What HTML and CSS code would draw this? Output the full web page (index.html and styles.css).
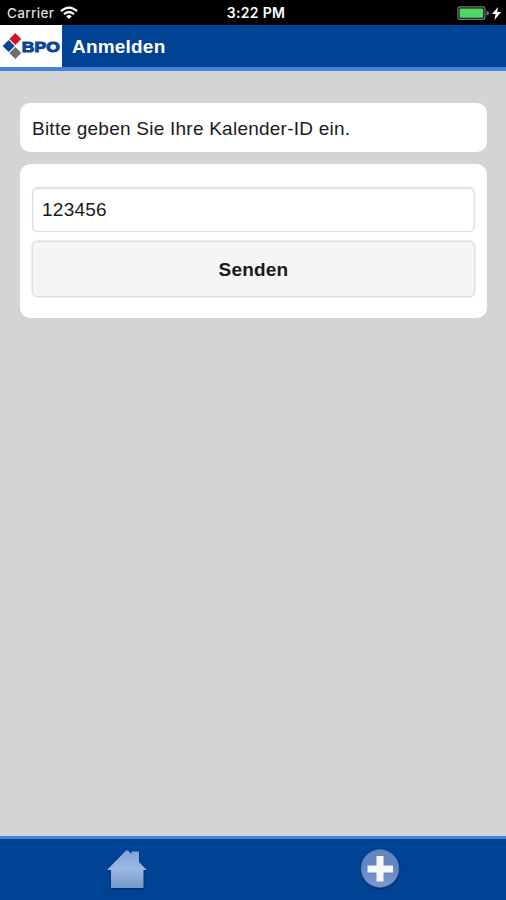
FILE: index.html
```html
<!DOCTYPE html>
<html lang="de">
<head>
    <meta charset="UTF-8">
    <meta name="viewport" content="width=device-width, initial-scale=1.0">
    <title>Anmelden</title>
    <link rel="stylesheet" href="styles.css">
</head>
<body>
    <div class="statusbar">
        <div class="carrier">
            <span>Carrier</span>
            <svg class="wifi" width="18" height="14" viewBox="0 0 18 14" fill="none" stroke="#fff" stroke-width="2.3">
                <path d="M1 5.2Q9-2 17 5.2"/>
                <path d="M4 8.2Q9 3.8 14 8.2"/>
                <path d="M9 13L6.2 10.2Q9 7.8 11.8 10.2Z" fill="#fff" stroke="none"/>
            </svg>
        </div>
        <div class="time">3:22 PM</div>
        <div class="battery">
            <svg width="46" height="15" viewBox="0 0 46 15">
                <rect x=".9" y=".9" width="27" height="12.4" rx="2" fill="#111" stroke="#777" stroke-width="1.2"/>
                <rect x="2.6" y="2.4" width="23.6" height="9.4" rx="1" fill="#4cd964"/>
                <path d="M29.5 4.6Q32 6 32 7.2T29.5 9.8Z" fill="#777"/>
                <path d="M41 1L35 8H38.6L37.4 14L44.2 6H40.2Z" fill="#fff"/>
            </svg>
        </div>
    </div>

    <header class="header">
        <div class="logo">
            <svg width="62" height="42" viewBox="0 0 62 42">
                <path d="M15.3 8L21.3 14L15.3 20L9.3 14Z" fill="#cf1722"/>
                <path d="M8.7 15L14.7 21L8.7 27L2.7 21Z" fill="#0b4396"/>
                <path d="M15.3 22L21.3 28L15.3 34L9.3 28Z" fill="#6d6e70"/>
                <text class="logo-text" x="21.8" y="26.6" textLength="38" lengthAdjust="spacingAndGlyphs">BPO</text>
            </svg>
        </div>
        <h1>Anmelden</h1>
    </header>

    <main class="content">
        <div class="box info">Bitte geben Sie Ihre Kalender-ID ein.</div>
        <form class="box form" id="login-form">
            <input type="text" id="kalender-id" value="123456">
            <button type="submit">Senden</button>
        </form>
    </main>

    <footer class="footer">
        <a class="tab">
            <svg width="42" height="42" viewBox="0 0 42 42">
                <defs>
                    <linearGradient id="house" x1="0" y1="0" x2="0" y2="1">
                        <stop offset="0" stop-color="#7ea3da"/>
                        <stop offset=".5" stop-color="#9db9e4"/>
                        <stop offset="1" stop-color="#7596cb"/>
                    </linearGradient>
                </defs>
                <path class="shadow" d="M1 22L19.5 3Q21 1.5 22.5 3L25.5 6V3.5H33V14L40.8 22H37.5V40H5V22Z" fill="url(#house)"/>
            </svg>
        </a>
        <a class="tab">
            <svg width="42" height="42" viewBox="0 0 42 42">
                <defs>
                    <linearGradient id="disc" x1="0" y1="0" x2="0" y2="1">
                        <stop offset="0" stop-color="#6386bd"/>
                        <stop offset=".5" stop-color="#6288c2"/>
                        <stop offset="1" stop-color="#7d9bd0"/>
                    </linearGradient>
                </defs>
                <circle class="shadow" cx="21" cy="20.5" r="18.8" fill="url(#disc)" stroke="#6580ac" stroke-width=".8"/>
                <path d="M17.5 8H24.5V17.5H34V24.5H24.5V33.5H17.5V24.5H8.5V17.5H17.5Z" fill="#f5f9ff"/>
            </svg>
        </a>
    </footer>

    <script>
        document.getElementById('login-form').addEventListener('submit', function(event) {
            event.preventDefault();
        });
    </script>
</body>
</html>
```

FILE: styles.css
```css
* { box-sizing: border-box; }
body { margin: 0; height: 900px; display: flex; flex-direction: column; background: #d4d4d4; font-family: "Liberation Sans", Arial, sans-serif; color: #1a1a1a; overflow: hidden; }

.statusbar { display: grid; grid-template-columns: 1fr auto 1fr; align-items: center; height: 25px; padding: 1px 3px 0 7px; background: #000; color: #fff; font-family: Inter, sans-serif; font-size: 13.5px; }
.carrier { display: flex; align-items: center; gap: 6px; color: #ddd; font-weight: 500; letter-spacing: .35px; }
.wifi { display: block; }
.time { padding-left: 2px; font-size: 14px; line-height: 16px; font-weight: 600; letter-spacing: .3px; }
.battery { display: flex; justify-content: flex-end; }

.header { display: flex; align-items: center; height: 46px; background: #004394; border-bottom: 4px solid #4582d4; color: #fff; }
.logo { width: 62px; height: 42px; background: #fff; }
.logo svg { display: block; }
.logo-text { font-size: 15.5px; font-weight: bold; fill: #0b4396; stroke: #0b4396; stroke-width: 1px; }
h1 { margin: 0 0 0 10px; padding-top: 2px; font-size: 19px; line-height: 40px; letter-spacing: .2px; }

.content { flex: 1; padding: 32px 19px 0 20px; }
.box { background: #fff; border-radius: 10px; }
.info { height: 49px; margin-bottom: 12px; padding: 0 12px; line-height: 52px; font-size: 19px; letter-spacing: .24px; }
.form { height: 154px; padding: 23px 12px 21px; }
input, button { display: block; width: 100%; border: 1.5px solid #dedede; border-radius: 6px; font-family: inherit; font-size: 19px; color: #1a1a1a; }
input { height: 45px; margin-bottom: 9px; padding: 1px 9px 0; background: #fff; box-shadow: inset 0 1px 2px #ddd, 0 0 1px #ddd; letter-spacing: .25px; }
button { height: 56px; padding: 2px 0 0; background: #f5f5f5; box-shadow: 0 0 1px 1px #ececec; font-weight: bold; letter-spacing: .2px; }

.footer { display: flex; height: 64px; background: #004394; border-top: 3px solid #4582d4; }
.tab { flex: 1; display: flex; align-items: center; justify-content: center; padding-bottom: 1px; }
.shadow { filter: drop-shadow(0 1px 1px #00245a); }
```
